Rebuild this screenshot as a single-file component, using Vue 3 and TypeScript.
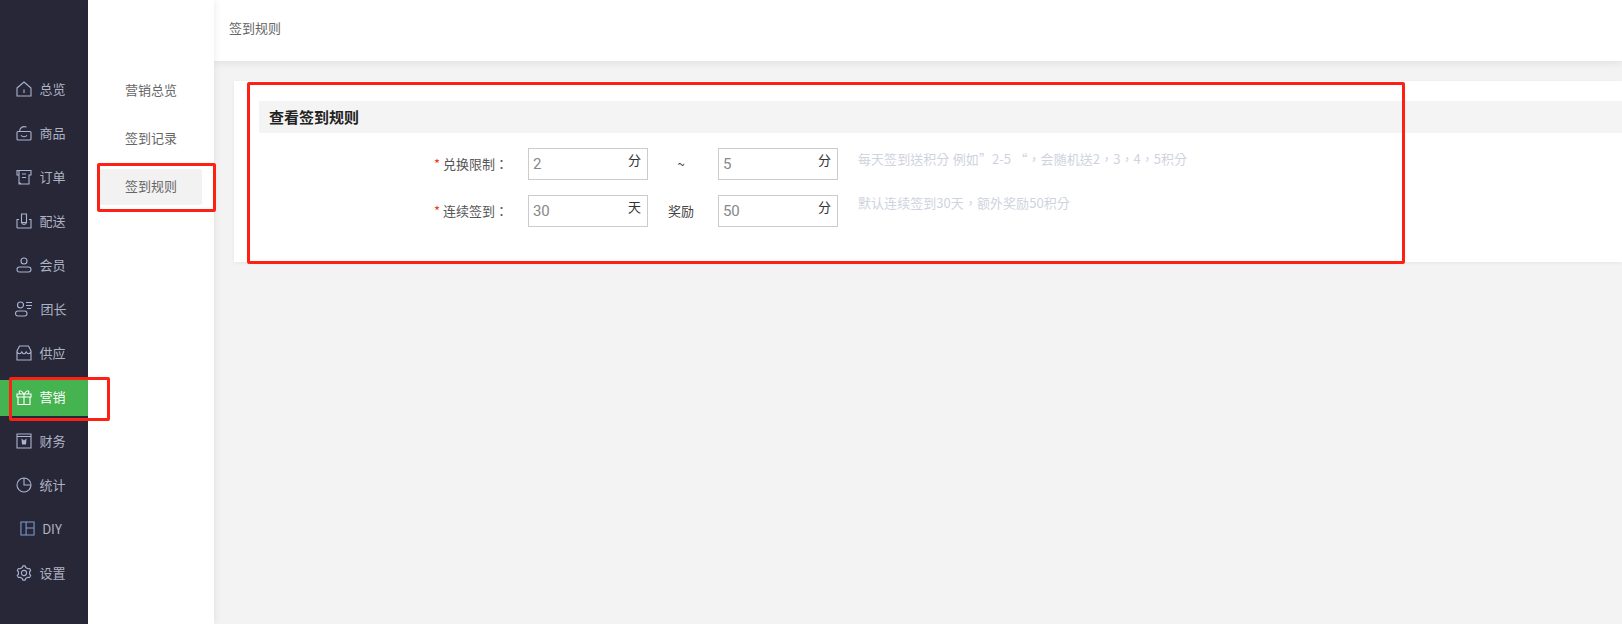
<script setup lang="ts">
function gearPath(): string {
  const pts: string[] = []
  const teeth = 6
  for (let i = 0; i < teeth; i++) {
    const base = (i / teeth) * Math.PI * 2 - Math.PI / 2
    const step = (Math.PI * 2) / teeth
    const ring: [number, number][] = [
      [7.2, base - step * 0.14],
      [7.2, base + step * 0.14],
      [5.7, base + step * 0.3],
      [5.7, base + step * 0.7],
    ]
    for (const [r, a] of ring) {
      pts.push(`${(8 + r * Math.cos(a)).toFixed(2)} ${(8 + r * Math.sin(a)).toFixed(2)}`)
    }
  }
  return 'M' + pts.join(' L') + ' Z M10.6 8 A2.6 2.6 0 1 1 5.4 8 A2.6 2.6 0 1 1 10.6 8 Z'
}

interface NavItem {
  label: string
  d: string
  fill?: string
  vb?: string
  kind?: string
  active?: boolean
}

const navItems: NavItem[] = [
  { label: '总览', d: 'M1 7 L8 1 L15 7 V15 H1 Z M8 8.5 V12' },
  { label: '商品', d: 'M2 6.5 H14 Q15 6.5 15 7.5 V14 Q15 15 14 15 H2 Q1 15 1 14 V7.5 Q1 6.5 2 6.5 Z M3.5 6.5 C4 2.5 6.5 .8 10.5 2 M5 10.2 C6.2 12.2 9.8 12.2 11 10.2' },
  { label: '订单', d: 'M1 1.5 H15 V6 H13 V15 H3 V6 H1 Z M6 5 H10 M6 8.5 H10 M3 1.5 V6 M5 15 L3 13.5' },
  { label: '配送', d: 'M5.5 1 H10.5 V9.5 H5.5 Z M3 6.5 H1 V13 M13 6.5 H15 V13 M1 15 H15 V13 M1 15 V13 M5.5 9.5 C6 12 10 12 10.5 9.5' },
  { label: '会员', d: 'M11 4 A3 3 0 1 1 5 4 A3 3 0 1 1 11 4 Z M3.5 10 H12.5 A2.5 2.5 0 0 1 12.5 15 H3.5 A2.5 2.5 0 0 1 3.5 10 Z' },
  { label: '团长', vb: '0 0 18 16', kind: 'wide', d: 'M8.5 4 A3 3 0 1 1 2.5 4 A3 3 0 1 1 8.5 4 Z M3 10 H9.5 A2.5 2.5 0 0 1 9.5 15 H3 A2.5 2.5 0 0 1 3 10 Z M11 1.5 H17 M11 4.5 H17 M12 7.5 H16' },
  { label: '供应', d: 'M3.5 1 H12.5 L15 6 V15 H1 V6 Z M1 6.5 C2 9.5 5 9.5 5.8 6.5 C6.5 9.5 9.5 9.5 10.2 6.5 C11 9.5 14 9.5 15 6.5' },
  { label: '营销', active: true, d: 'M1 5 H15 V8 H1 Z M2 8 V15.5 H14 V8 M8 5 V15.5 M8 5 C5 .4 1.8 .8 3.8 5 M8 5 C11 .4 14.2 .8 12.2 5' },
  { label: '财务', d: 'M1 1 H15 V15 H1 Z M1 3.5 H15', fill: 'M5.5 5.5 L8 7.5 L10.5 5.5 L10 11.5 H6 Z' },
  { label: '统计', d: 'M8 1 A7 7 0 1 1 1 8 A7 7 0 0 1 8 1 Z M8 1 V8 H15' },
  { label: 'DIY', kind: 'blue', d: 'M1 1 H15 V15 H1 Z M6.5 1 V15 M6.5 7.5 H15' },
  { label: '设置', d: gearPath() },
]

const subItems = [
  { label: '营销总览', active: false },
  { label: '签到记录', active: false },
  { label: '签到规则', active: true },
]
</script>

<template>
  <div class="page">
    <aside class="nav">
      <div v-for="item in navItems" :key="item.label" class="nav-item" :class="{ 'is-active': item.active }">
        <svg
          class="nav-icon"
          :class="item.kind"
          :viewBox="item.vb || '0 0 16 16'"
          fill="none"
          stroke="currentColor"
          stroke-width="1.1"
        >
          <path :d="item.d" />
          <path v-if="item.fill" :d="item.fill" fill="currentColor" stroke="none" />
        </svg>
        <span>{{ item.label }}</span>
      </div>
    </aside>

    <aside class="sub">
      <div v-for="s in subItems" :key="s.label" class="sub-item" :class="{ 'is-active': s.active }">{{ s.label }}</div>
    </aside>

    <div class="main">
      <header class="top">签到规则</header>
      <div class="content">
        <section class="card">
          <h2 class="card-title">查看签到规则</h2>
          <div class="form">
            <div class="row">
              <label class="label"><i>*</i> 兑换限制：</label>
              <div class="field"><input value="2" readonly /><span class="unit">分</span></div>
              <span class="sep">~</span>
              <div class="field"><input value="5" readonly /><span class="unit">分</span></div>
              <span class="hint hint-a">每天签到送积分 例如”2-5 “，会随机送2，3，4，5积分</span>
            </div>
            <div class="row">
              <label class="label"><i>*</i> 连续签到：</label>
              <div class="field"><input value="30" readonly /><span class="unit">天</span></div>
              <span class="sep">奖励</span>
              <div class="field"><input value="50" readonly /><span class="unit">分</span></div>
              <span class="hint hint-b">默认连续签到30天，额外奖励50积分</span>
            </div>
          </div>
        </section>
      </div>
    </div>

    <div class="mark mark-nav"></div>
    <div class="mark mark-sub"></div>
    <div class="mark mark-card"></div>
  </div>
</template>

<style>
html, body { margin: 0; background: #f3f3f3; }
</style>

<style scoped>
.page {
  position: relative;
  display: flex;
  height: 624px;
  overflow: hidden;
  background: #f3f3f3;
  font-family: "Noto Sans CJK SC", "Noto Sans", sans-serif;
  font-size: 13px;
  color: #333;
}
.nav {
  flex: 0 0 88px;
  box-sizing: border-box;
  padding-top: 72px;
  background: #282737;
  display: flex;
  flex-direction: column;
  gap: 8px;
}
.nav-item {
  height: 36px;
  box-sizing: border-box;
  padding: 0 6px 3px 0;
  display: flex;
  align-items: center;
  justify-content: center;
  gap: 7px;
  color: #aeb3c4;
}
.nav-item.is-active { background: #45b34f; color: #fff; }
.nav-icon { width: 16px; height: 16px; flex: none; color: #a9b4d1; }
.is-active .nav-icon { color: #fff; }
.nav-icon.wide { width: 18px; }
.nav-icon.blue { color: #7f9fd6; width: 15px; height: 15px; }
.sub {
  flex: 0 0 126px;
  box-sizing: border-box;
  padding: 73px 12px 0;
  background: #fff;
  display: flex;
  flex-direction: column;
  gap: 12px;
  box-shadow: 2px 0 6px rgba(0, 0, 0, 0.06);
  position: relative;
  z-index: 1;
}
.sub-item {
  height: 36px;
  line-height: 34px;
  text-align: center;
  border-radius: 2px;
  color: #666;
}
.sub-item.is-active { background: #f2f2f2; }
.main { flex: 1; min-width: 0; display: flex; flex-direction: column; }
.top {
  height: 61px;
  line-height: 56px;
  box-sizing: border-box;
  padding-left: 15px;
  background: #fff;
  color: #666;
  box-shadow: 0 2px 8px rgba(0, 0, 0, 0.08);
  position: relative;
}
.content { padding: 20px 0 0 20px; }
.card {
  height: 181px;
  box-sizing: border-box;
  padding: 20px 0 0 25px;
  background: #fff;
  box-shadow: 0 1px 4px rgba(0, 0, 0, 0.06);
}
.card-title {
  margin: 0;
  height: 32px;
  line-height: 32px;
  padding-left: 10px;
  background: #f4f4f4;
  font-size: 15px;
  font-weight: 700;
  color: #222;
}
.form { padding-top: 15px; display: flex; flex-direction: column; gap: 15px; }
.row { display: flex; height: 32px; align-items: center; }
.label {
  width: 249px;
  margin: -2px 20px 0 0;
  text-align: right;
  color: #555;
  font-family: "Noto Sans CJK TC", "Noto Sans", sans-serif;
}
.label i { color: #ed4014; font-style: normal; }
.field { position: relative; width: 120px; height: 32px; flex: none; }
.field input {
  width: 100%;
  height: 100%;
  box-sizing: border-box;
  border: 1px solid #ccc;
  padding: 0 4px;
  outline: none;
  font: 15px Roboto, "Noto Sans", sans-serif;
  letter-spacing: -0.3px;
  color: #888;
  background: #fff;
}
.unit {
  position: absolute;
  right: 7px;
  top: 2px;
  line-height: 20px;
  color: #333;
}
.sep {
  width: 66px;
  margin: -2px 4px 0 0;
  text-align: center;
  color: #444;
  flex: none;
}
.hint {
  margin: -1px 0 0 20px;
  align-self: flex-start;
  color: #cfd3e0;
  font-family: "Noto Sans CJK TC", "Noto Sans", sans-serif;
  word-spacing: 0.5px;
}
.hint-a { line-height: 24px; letter-spacing: 0.05px; }
.hint-b { line-height: 18px; letter-spacing: 0.05px; }
.mark {
  position: absolute;
  box-sizing: border-box;
  border: 3px solid #fd2015;
  border-radius: 2px;
  z-index: 5;
}
.mark-nav { left: 9px; top: 377px; width: 101px; height: 44px; }
.mark-sub { left: 97px; top: 163px; width: 119px; height: 49px; }
.mark-card { left: 247px; top: 82px; width: 1158px; height: 182px; }
</style>
